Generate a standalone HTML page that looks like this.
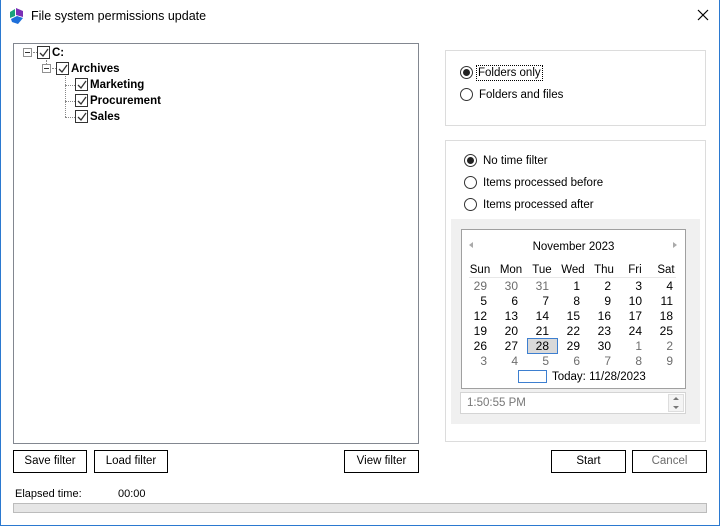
<!DOCTYPE html>
<html><head><meta charset="utf-8"><style>
*{box-sizing:border-box;margin:0;padding:0}
body{width:720px;height:526px;background:#fff;font-family:"Liberation Sans",sans-serif;font-size:12px;color:#000;position:relative;overflow:hidden}
.a{position:absolute}
.win{left:0;top:0;width:720px;height:526px;border:1px solid #2b79d0;border-top:none}
.btn{position:absolute;height:23px;border:1px solid #000;background:#fff;text-align:center;line-height:21px;font-size:11.5px}
.grp{position:absolute;border:1px solid #dcdcdc}
.rad{position:absolute;width:13px;height:13px;border:1px solid #333;border-radius:50%;background:#fff}
.rad.on::after{content:"";position:absolute;left:2px;top:2px;width:7px;height:7px;border-radius:50%;background:#222}
.lbl{position:absolute;font-size:11.5px;line-height:14px}
.cb{position:absolute;width:13px;height:13px;border:1px solid #333;background:#fff}
.cb svg{position:absolute;left:0;top:0}
.tl{position:absolute;font-weight:bold;font-size:11.5px;line-height:14px}
.pm{position:absolute;width:9px;height:9px;border:1px solid #919191;background:#fff}
.pm::after{content:"";position:absolute;left:1px;top:3px;width:5px;height:1px;background:#333}
.dh{position:absolute;border-top:1px dotted #888;height:0}
.dv{position:absolute;border-left:1px dotted #888;width:0}
.d{position:absolute;width:24px;text-align:right;font-size:12px;line-height:14px}
.g{color:#6d6d6d}
</style></head><body>
<div class="a win"></div>
<svg class="a" style="left:8px;top:7px" width="18" height="18" viewBox="0 0 18 18">
<path d="M2 5 L7 2 L7 9 L2 11Z" fill="#1aa37a"/><path d="M8 1 L15 4 L15 10 L8 8Z" fill="#7b2fb5"/><path d="M3 12 L9 9 L15 11 L10 17 L4 15Z" fill="#1e6fd9"/></svg>
<div class="lbl" style="left:31px;top:9px;font-size:12.5px">File system permissions update</div>
<svg class="a" style="left:697px;top:9px" width="12" height="12"><path d="M1 1L11 11M11 1L1 11" stroke="#000" stroke-width="1.2"/></svg>

<div class="a" style="left:13px;top:43px;width:406px;height:401px;border:1px solid #828790"></div>
<div class="pm" style="left:23px;top:48px"></div>
<div class="dh" style="left:33px;top:52px;width:4px"></div>
<div class="cb" style="left:37px;top:46px"><svg width="11" height="11"><path d="M2 6L5 9L10 2" stroke="#333" fill="none" stroke-width="1.3"/></svg></div>
<div class="tl" style="left:52px;top:46px">C:</div>
<div class="dv" style="left:46px;top:60px;height:4px"></div>
<div class="pm" style="left:42px;top:64px"></div>
<div class="dh" style="left:52px;top:68px;width:4px"></div>
<div class="cb" style="left:56px;top:62px"><svg width="11" height="11"><path d="M2 6L5 9L10 2" stroke="#333" fill="none" stroke-width="1.3"/></svg></div>
<div class="tl" style="left:71px;top:62px">Archives</div>
<div class="dv" style="left:65px;top:76px;height:41px"></div>
<div class="dh" style="left:65px;top:85px;width:10px"></div>
<div class="dh" style="left:65px;top:101px;width:10px"></div>
<div class="dh" style="left:65px;top:117px;width:10px"></div>
<div class="cb" style="left:75px;top:78px"><svg width="11" height="11"><path d="M2 6L5 9L10 2" stroke="#333" fill="none" stroke-width="1.3"/></svg></div>
<div class="tl" style="left:90px;top:78px">Marketing</div>
<div class="cb" style="left:75px;top:94px"><svg width="11" height="11"><path d="M2 6L5 9L10 2" stroke="#333" fill="none" stroke-width="1.3"/></svg></div>
<div class="tl" style="left:90px;top:94px">Procurement</div>
<div class="cb" style="left:75px;top:110px"><svg width="11" height="11"><path d="M2 6L5 9L10 2" stroke="#333" fill="none" stroke-width="1.3"/></svg></div>
<div class="tl" style="left:90px;top:110px">Sales</div>

<div class="grp" style="left:445px;top:50px;width:261px;height:76px"></div>
<div class="rad on" style="left:460px;top:66px"></div>
<div class="lbl" style="left:477px;top:66px;outline:1px dotted #000;padding:0 1px">Folders only</div>
<div class="rad" style="left:460px;top:88px"></div>
<div class="lbl" style="left:479px;top:88px">Folders and files</div>

<div class="grp" style="left:445px;top:140px;width:261px;height:302px"></div>
<div class="rad on" style="left:464px;top:154px"></div>
<div class="lbl" style="left:483px;top:154px">No time filter</div>
<div class="rad" style="left:464px;top:176px"></div>
<div class="lbl" style="left:483px;top:176px">Items processed before</div>
<div class="rad" style="left:464px;top:198px"></div>
<div class="lbl" style="left:483px;top:198px">Items processed after</div>
<div class="a" style="left:451px;top:219px;width:249px;height:205px;background:#f0f0f0"></div>
<div class="a" style="left:461px;top:229px;width:225px;height:160px;background:#fff;border:1px solid #a0a0a0"></div>
<div class="a" style="left:469px;top:242px;width:0;height:0;border:3px solid transparent;border-right:4px solid #aaa;border-left:none"></div>
<div class="a" style="left:673px;top:242px;width:0;height:0;border:3px solid transparent;border-left:4px solid #aaa;border-right:none"></div>
<div class="lbl" style="left:461px;top:240px;width:225px;text-align:center">November 2023</div>
<div class="a" style="left:469px;top:277px;width:207px;height:1px;background:#e8e8e8"></div>
<div class="a" style="left:527px;top:338px;width:31px;height:16px;background:#d9d9d9;border:1px solid #3d7fd0"></div>
<div id="cal"></div>
<div class="a" style="left:518px;top:370px;width:29px;height:13px;border:1px solid #3d7fd0"></div>
<div class="lbl" style="left:552px;top:370px">Today: 11/28/2023</div>
<div class="a" style="left:460px;top:392px;width:226px;height:22px;background:#fff;border:1px solid #d4d4d4"></div>
<div class="lbl" style="left:467px;top:396px;color:#777">1:50:55 PM</div>
<div class="a" style="left:668px;top:394px;width:16px;height:18px;border:1px solid #ddd;background:#f4f4f4"></div>
<div class="a" style="left:673px;top:397px;border:3px solid transparent;border-bottom:3px solid #777;border-top:none"></div>
<div class="a" style="left:673px;top:406px;border:3px solid transparent;border-top:3px solid #777;border-bottom:none"></div>

<div class="btn" style="left:13px;top:450px;width:74px">Save filter</div>
<div class="btn" style="left:94px;top:450px;width:74px">Load filter</div>
<div class="btn" style="left:344px;top:450px;width:75px">View filter</div>
<div class="btn" style="left:551px;top:450px;width:75px">Start</div>
<div class="btn" style="left:632px;top:450px;width:75px;color:#6d6d6d">Cancel</div>
<div class="lbl" style="left:15px;top:487px;font-size:11px">Elapsed time:</div>
<div class="lbl" style="left:118px;top:487px;font-size:11px">00:00</div>
<div class="a" style="left:13px;top:503px;width:694px;height:10px;background:#e6e6e6;border:1px solid #bcbcbc"></div>
<script>
var c=document.getElementById('cal'),h='';
var hd=['Sun','Mon','Tue','Wed','Thu','Fri','Sat'],R=[487,518,549,580,611,642,673];
hd.forEach(function(t,i){h+='<div class="lbl" style="left:'+(R[i]-28)+'px;width:42px;text-align:center;top:263px">'+t+'</div>'});
var d=[29,30,31];for(var i=1;i<=30;i++)d.push(i);for(i=1;i<=9;i++)d.push(i);
d.forEach(function(n,k){var r=Math.floor(k/7),col=k%7,g=(k<3||k>32)?' g':'';
h+='<div class="d'+g+'" style="left:'+(R[col]-24)+'px;top:'+(279+r*15)+'px">'+n+'</div>'});
c.innerHTML=h;
</script>
</body></html>
